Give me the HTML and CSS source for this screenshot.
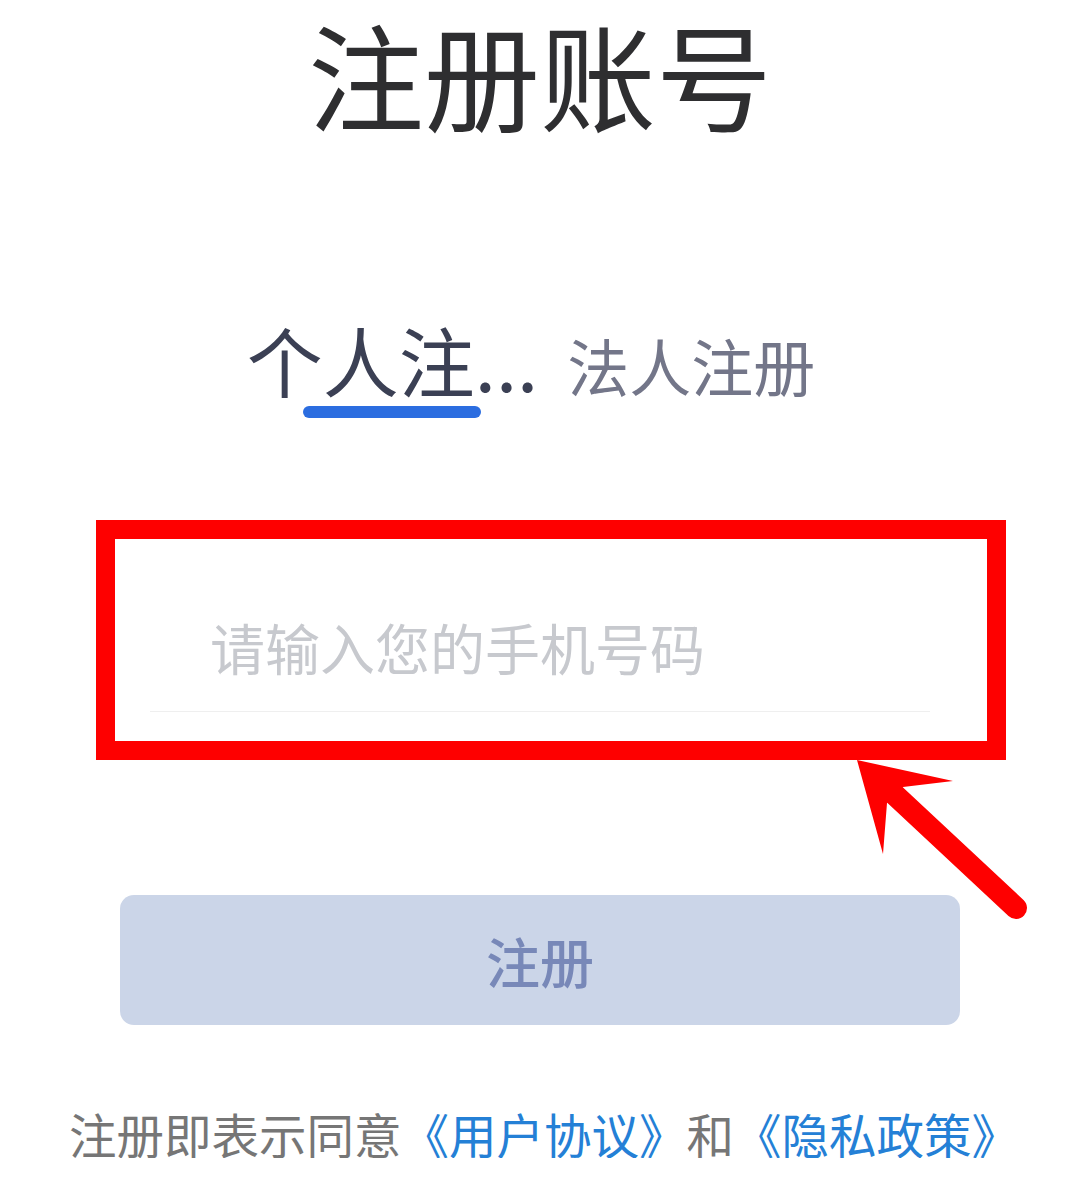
FILE: index.html
```html
<!DOCTYPE html>
<html lang="zh-CN">
<head>
    <meta charset="UTF-8">
    <meta name="viewport" content="width=device-width, initial-scale=1.0">
    <title>注册账号</title>
    <link rel="stylesheet" href="styles.css">
</head>
<body>
    <h1 class="title">注册账号</h1>

    <div class="tabs">
        <div class="tab active">
            <span class="tab-label">个人注...</span>
            <span class="tab-bar"></span>
        </div>
        <div class="tab">
            <span class="tab-label">法人注册</span>
        </div>
    </div>

    <div class="field">
        <input class="phone-input" type="tel" placeholder="请输入您的手机号码">
        <!-- annotation overlay -->
        <div class="mark-frame"></div>
        <svg class="mark-arrow" width="200" height="180" viewBox="0 0 200 180">
            <polygon points="17,10 113,31 63,37 47,53 43,104" fill="#fe0000"/>
            <line x1="55" y1="45" x2="176" y2="158" stroke="#fe0000" stroke-width="22" stroke-linecap="round"/>
        </svg>
    </div>

    <button class="submit" type="button">注册</button>

    <p class="agreement">注册即表示同意<a href="#">《用户协议》</a>和<a href="#">《隐私政策》</a></p>
</body>
</html>
```

FILE: styles.css
```css
body {
    margin: 0;
    background: #fff;
    font-family: "Noto Sans CJK SC", "Noto Sans", sans-serif;
    width: 1080px;
}
.title {
    margin: 0;
    padding-top: 2px;
    font-size: 116px;
    line-height: 140px;
    font-weight: 400;
    color: #2e2e30;
    text-align: center;
}
.tabs {
    display: flex;
    justify-content: center;
    align-items: baseline;
    gap: 29px;
    padding-right: 18px;
    margin-top: 179px;
}
.tab {
    display: flex;
    flex-direction: column;
    align-items: center;
}
.tab-label {
    font-size: 62px;
    line-height: 1;
    color: #737689;
    white-space: nowrap;
}
.tab.active .tab-label {
    font-size: 76px;
    color: #3b4054;
}
.tab-bar {
    width: 178px;
    height: 12px;
    margin-top: 9px;
    border-radius: 6px;
    background: #2b6de0;
}
.field {
    position: relative;
    width: 780px;
    margin: 142px 0 0 150px;
    border-bottom: 1px solid #efefef;
}
.phone-input {
    display: block;
    width: 100%;
    box-sizing: border-box;
    border: none;
    outline: none;
    padding: 59px 0 38px 60px;
    font-family: inherit;
    font-size: 55px;
    line-height: 55px;
    height: 151px;
    color: #333;
    background: transparent;
}
.phone-input::placeholder {
    color: #c7c9ce;
}
.mark-frame {
    position: absolute;
    top: -40px;
    left: -54px;
    right: -76px;
    bottom: -49px;
    border: 19px solid #fe0000;
    pointer-events: none;
}
.mark-arrow {
    position: absolute;
    left: 690px;
    top: 190px;
}
.submit {
    display: block;
    width: 840px;
    height: 130px;
    margin: 183px 0 0 120px;
    border: none;
    border-radius: 14px;
    background: #cbd5e8;
    color: #7888b8;
    font-family: inherit;
    font-size: 54px;
    font-weight: 500;
}
.agreement {
    margin: 85px 0 0;
    padding-left: 8px;
    font-size: 47.5px;
    line-height: 1;
    color: #767676;
    text-align: center;
    white-space: nowrap;
}
.agreement a {
    color: #2480d6;
    text-decoration: none;
}
```
